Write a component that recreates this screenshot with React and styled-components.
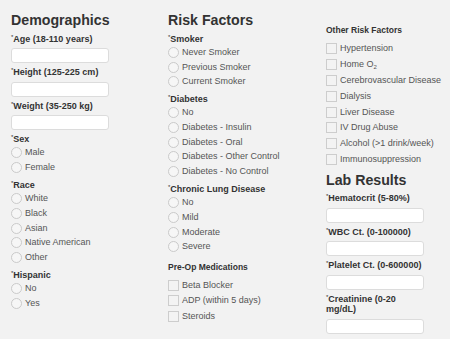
import React from "react"
import styled, { createGlobalStyle } from "styled-components"

const GlobalStyle = createGlobalStyle`
  html, body {
    margin: 0;
    padding: 0;
    background: #f2f2f2;
    font-family: "Liberation Sans", Arial, sans-serif;
  }
  * {
    box-sizing: border-box;
  }
`

const Page = styled.div`
  display: grid;
  grid-template-columns: 157px 158px 117px;
  padding: 11.5px 0 0 11px;
  width: 450px;
  height: 339px;
  overflow: hidden;
`

const Column = styled.div`
  display: flex;
  flex-direction: column;
  padding-top: ${(p) => p.$offset || 0}px;
`

const Heading = styled.h2`
  margin: ${(p) => p.$top || 0}px 0 ${(p) => p.$bottom ?? 5}px;
  font-size: 14.2px;
  line-height: 17px;
  font-weight: bold;
  color: #333;
`

const SubHeading = styled.h4`
  margin: ${(p) => p.$top || 0}px 0 ${(p) => p.$bottom ?? 5}px;
  font-size: 8.5px;
  line-height: 11px;
  font-weight: bold;
  color: #333;
`

const Field = styled.div`
  display: flex;
  flex-direction: column;
  margin-bottom: ${(p) => (p.$group ? 5 : 0)}px;
`

const Label = styled.label`
  font-size: 9px;
  line-height: 10.5px;
  font-weight: bold;
  color: #333;
  margin-bottom: ${(p) => (p.$input ? 4 : 1)}px;
  width: 100px;

  &::before {
    content: "*";
    font-size: 6px;
    font-weight: normal;
    vertical-align: 3px;
    line-height: 0;
  }
`

const TextInput = styled.input`
  width: 98px;
  height: 15px;
  margin: 0 0 4px;
  padding: 0 4px;
  border: 1px solid #dcdcdc;
  border-radius: 3px;
  background: #fff;
  font-size: 9px;
  outline: none;
`

const Option = styled.div`
  display: flex;
  align-items: center;
  height: ${(p) => p.$h || 14.7}px;
  font-size: 9px;
  color: #555;
  white-space: nowrap;
`

const Radio = styled.span`
  width: 11px;
  height: 11px;
  border-radius: 50%;
  border: 1px solid #cacaca;
  background: #f6f6f6;
  margin-right: 3px;
  flex: none;
`

const Box = styled.span`
  width: 11px;
  height: 11px;
  border: 1px solid #cdcdcd;
  background: #f3f3f3;
  margin-right: 3px;
  flex: none;
`

const OptionText = styled.span`
  line-height: 11px;
`

const Sub = styled.sub`
  font-size: 6px;
  line-height: 0;
  vertical-align: -1.5px;
`

const InputField = ({ label }) => (
  <Field>
    <Label $input>{label}</Label>
    <TextInput type="text" />
  </Field>
)

const RadioGroup = ({ label, options }) => (
  <Field $group>
    <Label>{label}</Label>
    {options.map((o) => (
      <Option key={o}>
        <Radio />
        <OptionText>{o}</OptionText>
      </Option>
    ))}
  </Field>
)

const CheckList = ({ options, rowHeight }) =>
  options.map((o, i) => (
    <Option $h={rowHeight} key={i}>
      <Box />
      <OptionText>{o}</OptionText>
    </Option>
  ))

export default function App() {
  return (
    <>
      <GlobalStyle />
      <Page>
        <Column>
          <Heading>Demographics</Heading>
          <InputField label="Age (18-110 years)" />
          <InputField label="Height (125-225 cm)" />
          <InputField label="Weight (35-250 kg)" />
          <RadioGroup label="Sex" options={["Male", "Female"]} />
          <RadioGroup
            label="Race"
            options={["White", "Black", "Asian", "Native American", "Other"]}
          />
          <RadioGroup label="Hispanic" options={["No", "Yes"]} />
        </Column>

        <Column>
          <Heading>Risk Factors</Heading>
          <RadioGroup
            label="Smoker"
            options={["Never Smoker", "Previous Smoker", "Current Smoker"]}
          />
          <RadioGroup
            label="Diabetes"
            options={[
              "No",
              "Diabetes - Insulin",
              "Diabetes - Oral",
              "Diabetes - Other Control",
              "Diabetes - No Control",
            ]}
          />
          <RadioGroup
            label="Chronic Lung Disease"
            options={["No", "Mild", "Moderate", "Severe"]}
          />
          <SubHeading $top={3} $bottom={4}>
            Pre-Op Medications
          </SubHeading>
          <CheckList
            rowHeight={15.5}
            options={["Beta Blocker", "ADP (within 5 days)", "Steroids"]}
          />
        </Column>

        <Column $offset={13.5}>
          <SubHeading>Other Risk Factors</SubHeading>
          <CheckList
            rowHeight={15.8}
            options={[
              "Hypertension",
              <>
                Home O<Sub>2</Sub>
              </>,
              "Cerebrovascular Disease",
              "Dialysis",
              "Liver Disease",
              "IV Drug Abuse",
              "Alcohol (>1 drink/week)",
              "Immunosuppression",
            ]}
          />
          <Heading $top={5} $bottom={4}>
            Lab Results
          </Heading>
          <InputField label="Hematocrit (5-80%)" />
          <InputField label="WBC Ct. (0-100000)" />
          <InputField label="Platelet Ct. (0-600000)" />
          <InputField label="Creatinine (0-20 mg/dL)" />
        </Column>
      </Page>
    </>
  )
}
